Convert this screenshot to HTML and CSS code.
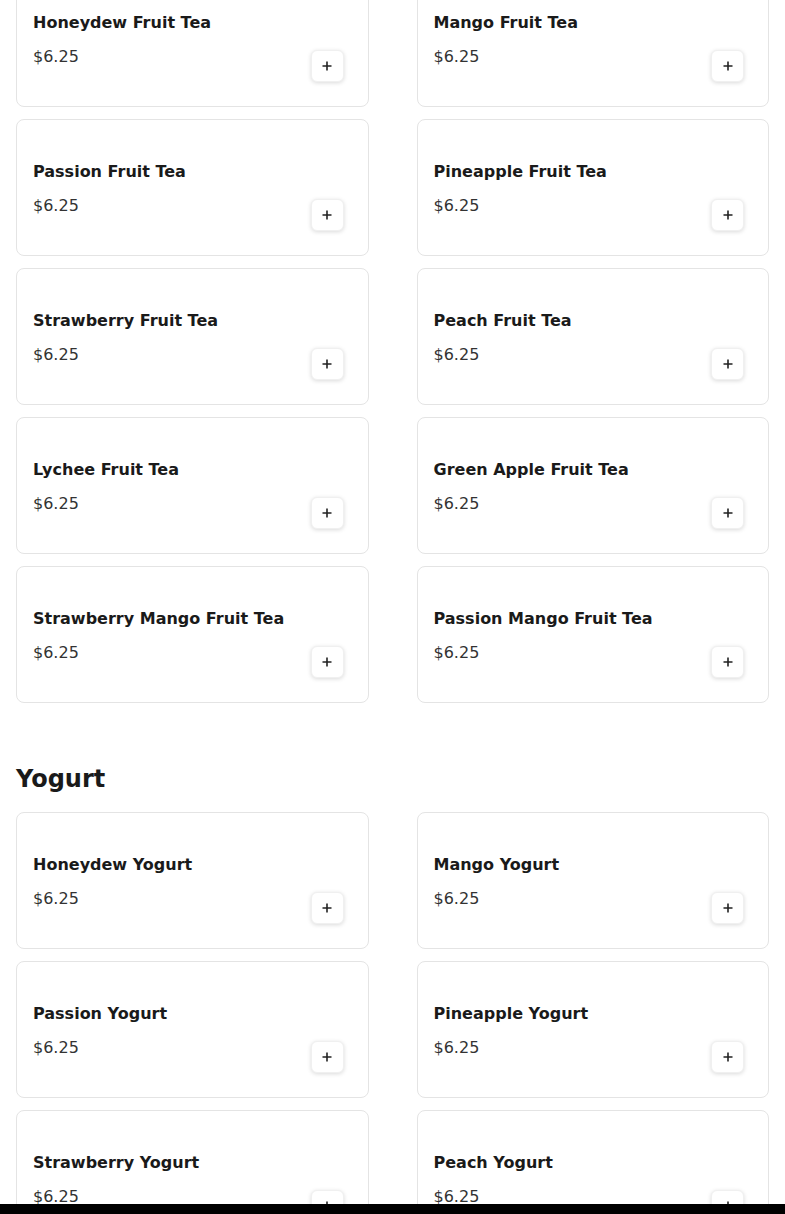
FILE: index.html
```html
<!DOCTYPE html>
<html lang="en">
<head>
    <meta charset="UTF-8">
    <meta name="viewport" content="width=device-width, initial-scale=1.0">
    <title>Menu</title>
    <link rel="stylesheet" href="styles.css">
</head>
<body>
    <div class="menu">
        <section class="category">
            <div class="items">
                <div class="card"><div class="info"><h3>Honeydew Fruit Tea</h3><div class="price">$6.25</div></div><button class="add"><svg viewBox="0 0 12 12"><path d="M6 1.5v9M1.5 6h9"/></svg></button></div>
                <div class="card"><div class="info"><h3>Mango Fruit Tea</h3><div class="price">$6.25</div></div><button class="add"><svg viewBox="0 0 12 12"><path d="M6 1.5v9M1.5 6h9"/></svg></button></div>
                <div class="card"><div class="info"><h3>Passion Fruit Tea</h3><div class="price">$6.25</div></div><button class="add"><svg viewBox="0 0 12 12"><path d="M6 1.5v9M1.5 6h9"/></svg></button></div>
                <div class="card"><div class="info"><h3>Pineapple Fruit Tea</h3><div class="price">$6.25</div></div><button class="add"><svg viewBox="0 0 12 12"><path d="M6 1.5v9M1.5 6h9"/></svg></button></div>
                <div class="card"><div class="info"><h3>Strawberry Fruit Tea</h3><div class="price">$6.25</div></div><button class="add"><svg viewBox="0 0 12 12"><path d="M6 1.5v9M1.5 6h9"/></svg></button></div>
                <div class="card"><div class="info"><h3>Peach Fruit Tea</h3><div class="price">$6.25</div></div><button class="add"><svg viewBox="0 0 12 12"><path d="M6 1.5v9M1.5 6h9"/></svg></button></div>
                <div class="card"><div class="info"><h3>Lychee Fruit Tea</h3><div class="price">$6.25</div></div><button class="add"><svg viewBox="0 0 12 12"><path d="M6 1.5v9M1.5 6h9"/></svg></button></div>
                <div class="card"><div class="info"><h3>Green Apple Fruit Tea</h3><div class="price">$6.25</div></div><button class="add"><svg viewBox="0 0 12 12"><path d="M6 1.5v9M1.5 6h9"/></svg></button></div>
                <div class="card"><div class="info"><h3>Strawberry Mango Fruit Tea</h3><div class="price">$6.25</div></div><button class="add"><svg viewBox="0 0 12 12"><path d="M6 1.5v9M1.5 6h9"/></svg></button></div>
                <div class="card"><div class="info"><h3>Passion Mango Fruit Tea</h3><div class="price">$6.25</div></div><button class="add"><svg viewBox="0 0 12 12"><path d="M6 1.5v9M1.5 6h9"/></svg></button></div>
            </div>
        </section>

        <section class="category">
            <h2>Yogurt</h2>
            <div class="items">
                <div class="card"><div class="info"><h3>Honeydew Yogurt</h3><div class="price">$6.25</div></div><button class="add"><svg viewBox="0 0 12 12"><path d="M6 1.5v9M1.5 6h9"/></svg></button></div>
                <div class="card"><div class="info"><h3>Mango Yogurt</h3><div class="price">$6.25</div></div><button class="add"><svg viewBox="0 0 12 12"><path d="M6 1.5v9M1.5 6h9"/></svg></button></div>
                <div class="card"><div class="info"><h3>Passion Yogurt</h3><div class="price">$6.25</div></div><button class="add"><svg viewBox="0 0 12 12"><path d="M6 1.5v9M1.5 6h9"/></svg></button></div>
                <div class="card"><div class="info"><h3>Pineapple Yogurt</h3><div class="price">$6.25</div></div><button class="add"><svg viewBox="0 0 12 12"><path d="M6 1.5v9M1.5 6h9"/></svg></button></div>
                <div class="card"><div class="info"><h3>Strawberry Yogurt</h3><div class="price">$6.25</div></div><button class="add"><svg viewBox="0 0 12 12"><path d="M6 1.5v9M1.5 6h9"/></svg></button></div>
                <div class="card"><div class="info"><h3>Peach Yogurt</h3><div class="price">$6.25</div></div><button class="add"><svg viewBox="0 0 12 12"><path d="M6 1.5v9M1.5 6h9"/></svg></button></div>
            </div>
        </section>
    </div>

    <div class="bottom-bar"></div>
</body>
</html>
```

FILE: styles.css
```css
body {
    font-family: "DejaVu Sans", sans-serif;
    margin: 0;
    background-color: #fff;
    color: #1a1a1a;
}
.menu {
    margin-top: -30px;
    padding: 0 16px;
}
.category h2 {
    font-size: 24px;
    line-height: 28px;
    font-weight: bold;
    margin: 62px 0 19px;
}
.items {
    display: grid;
    grid-template-columns: 1fr 1fr;
    column-gap: 48px;
    row-gap: 12px;
}
.card {
    box-sizing: border-box;
    height: 137px;
    display: flex;
    justify-content: space-between;
    align-items: flex-end;
    padding: 40px 24px 24px 16px;
    border: 1px solid #e4e4e4;
    border-radius: 8px;
    background: white;
}
.info {
    align-self: flex-start;
}
.info h3 {
    margin: 0 0 10px;
    font-size: 16px;
    line-height: 24px;
    font-weight: bold;
    color: #1a1a1a;
}
.price {
    font-size: 16px;
    line-height: 24px;
    color: #333;
}
.add {
    width: 33px;
    height: 32px;
    padding: 0;
    border: 1px solid #f0f0f0;
    border-radius: 6px;
    background: white;
    box-shadow: 0 1px 4px rgba(0,0,0,0.15);
    display: flex;
    align-items: center;
    justify-content: center;
    cursor: pointer;
}
.add svg {
    width: 12px;
    height: 12px;
    stroke: #222;
    stroke-width: 1.6;
    fill: none;
}
.bottom-bar {
    position: fixed;
    left: 0;
    right: 0;
    bottom: 0;
    height: 10px;
    background: #000;
}
```
